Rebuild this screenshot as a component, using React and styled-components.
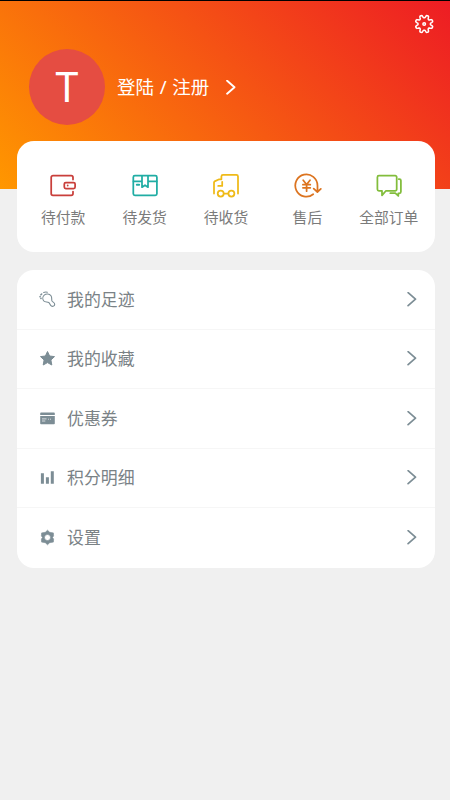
import React from 'react'
import styled, { createGlobalStyle } from 'styled-components'

const GlobalStyle = createGlobalStyle`
    * {
        box-sizing: border-box;
    }

    body {
        margin: 0;
        background-color: #f0f0f0;
        font-family: "Noto Sans", "Noto Sans CJK SC", sans-serif;
    }
`;

const Page = styled.div`
    height: 800px;
    overflow: hidden;
    background-color: #f0f0f0;
`;

const Header = styled.header`
    height: 189px;
    border-top: 1px solid #000;
    background: linear-gradient(45deg, #ff9700, #ed1c24) border-box;
    display: flex;
    align-items: flex-start;
    padding: 48px 15px 0 29px;
`;

const Avatar = styled.div`
    width: 76px;
    height: 76px;
    border-radius: 50%;
    background-color: #e54d42;
    color: #fff;
    font-size: 41px;
    line-height: 74px;
    text-align: center;
`;

const Login = styled.div`
    display: flex;
    align-items: center;
    height: 76px;
    margin-left: 12px;
    color: #fff;
    font-size: 18.5px;
    line-height: 24px;
    word-spacing: 0.9px;
    white-space: pre;

    svg {
        margin-left: 17px;
    }
`;

const Setting = styled.div`
    height: 22px;
    margin: -36px 0 0 auto;
    color: #fff;
`;

const Card = styled.section`
    width: 418px;
    margin-left: 17px;
    border-radius: 17px;
    background-color: #fff;
`;

const OrderCard = styled(Card)`
    height: 111px;
    margin-top: -48px;
    padding: 31px 5.5px 0;
    display: grid;
    grid-template-columns: repeat(5, 1fr);
`;

const OrderItem = styled.div`
    display: flex;
    flex-direction: column;
    align-items: center;
    color: ${(props) => props.$color};

    span {
        margin-top: 8px;
        color: #7b7b7b;
        font-size: 14.8px;
        line-height: 22px;
    }
`;

const MenuCard = styled(Card)`
    height: 297.5px;
    margin-top: 18px;
`;

const MenuRow = styled.div`
    display: flex;
    align-items: center;
    height: 59.5px;
    padding: 0 18px 0 22px;
    color: #7c8d95;
    border-bottom: 1px solid ${(props) => (props.$last ? 'transparent' : '#f6f6f6')};

    span {
        flex: 1;
        margin-left: 11px;
        padding-top: 1px;
        color: #7a8286;
        font-size: 16.9px;
        line-height: 24px;
    }
`;

const Line = styled.svg`
    display: block;
    flex-shrink: 0;
    fill: none;
    stroke: currentColor;
    stroke-width: ${(props) => props.$weight || 1.75};
    stroke-linecap: round;
    stroke-linejoin: round;
`;

const MenuSvg = styled.svg`
    display: block;
    fill: currentColor;
`;

// wavy gear outline, one smooth wave per tooth
const gearPath = (cx, cy, teeth, radius, depth) => {
    const points = []
    const total = teeth * 16
    for (let i = 0; i < total; i++) {
        const a = (i / total) * Math.PI * 2
        const r = radius + depth * Math.tanh(-2.2 * Math.cos(a * teeth))
        points.push(`${(cx + Math.cos(a) * r).toFixed(2)} ${(cy + Math.sin(a) * r).toFixed(2)}`)
    }
    return `M${points.join('L')}Z`
}

const GearOutline = () => (
    <Line width="22" height="22" viewBox="0 0 22 22" $weight={1.5}>
        <path d={gearPath(11.2, 11, 8, 7.55, 1.4)} />
        <circle cx="11.2" cy="11" r="1.3" />
    </Line>
)

const WalletIcon = () => (
    <Line width="30" height="26" viewBox="0 0 30 26">
        <path d="M25 7.5V5.5a1.8 1.8 0 0 0-1.8-1.8H5a1.8 1.8 0 0 0-1.8 1.8v16A1.8 1.8 0 0 0 5 23.3h18.2a1.8 1.8 0 0 0 1.8-1.8v-2" />
        <rect x="16.3" y="10.5" width="10.8" height="6" rx="1.5" />
        <circle cx="19.7" cy="13.5" r=".9" fill="currentColor" stroke="none" />
    </Line>
)

const BoxIcon = () => (
    <Line width="30" height="26" viewBox="0 0 30 26">
        <rect x="3.3" y="3.7" width="23.6" height="19.6" rx="1.6" />
        <path d="M3.5 9.4h8.2M18.3 9.4h8.4M12 4v11.2l3-2 3 2V4" />
        <path d="M6.8 12.7h2.4" strokeWidth="1.9" />
    </Line>
)

const TruckIcon = () => (
    <Line width="30" height="26" viewBox="0 0 30 26">
        <path d="M3 21.5v-11q0-.7.6-1.1l4.6-2.1h2.2V4.5A1.6 1.6 0 0 1 12 2.9h13.4A1.6 1.6 0 0 1 27 4.5v17" />
        <path d="M11.2 9.8v4.1H7.2M12.9 21.6h4.3" />
        <circle cx="9.7" cy="21.6" r="3" />
        <circle cx="20.4" cy="21.6" r="3" />
    </Line>
)

const RefundIcon = () => (
    <Line width="30" height="26" viewBox="0 0 30 26">
        <path d="M21.2 22.3A11.1 11.1 0 1 1 25.5 13.5V19.4M21.7 16.6l3.7 3.4 3.4-3.1" />
        <path d="M11.2 8.3l3.4 4.2L18 8.3M10.9 12.7h7.4M10.9 15.8h7.4M14.6 12.5v6.7" />
    </Line>
)

const ChatIcon = () => (
    <Line width="30" height="26" viewBox="0 0 30 26">
        <path d="M4.9 3.7h16.3a1.5 1.5 0 0 1 1.5 1.5v12.1a1.5 1.5 0 0 1-1.5 1.5h-9.2l-4 4.6v-4.6H4.9a1.5 1.5 0 0 1-1.5-1.5V5.2a1.5 1.5 0 0 1 1.5-1.5Z" />
        <path d="M24.7 7h.7a1.5 1.5 0 0 1 1.5 1.5v11.3a1.5 1.5 0 0 1-1.5 1.5h-1.1v2.6l-3-2.7h-5" />
    </Line>
)

const ArrowIcon = ({ weight = 1.7 }) => (
    <Line width="10" height="15" viewBox="0 0 10 15" $weight={weight}>
        <path d="M1.1.7l7.4 6.5-7.4 6.5" />
    </Line>
)

const FootIcon = () => (
    <Line width="17" height="17" viewBox="0 0 17 17" $weight={1.1}>
        <path d="M5.2 4.2C7.2 2.3 10.4 2.600 12 4.800c1.300 1.900.3 3.800 1 5.200.7 1.200 2.600 1.400 2.700 3.200 0 1.800-1.900 2.700-3.300 1.900-1.500-.9-1.300-2.700-2.700-3.600-1.500-.9-3.600.1-4.900-1.500-1.400-1.700-1.300-4.300.4-5.800Z" />
        <path d="M4.700 1.500q1.800-.9 3.600-.2" />
        <path d="M1.900 3.800l.8-.8M1 5.700l.1-.1M1.900 7.500l.1-.1" strokeWidth="1.5" />
    </Line>
)

const StarIcon = () => (
    <MenuSvg width="17" height="17" viewBox="0 0 17 17">
        <path stroke="currentColor" strokeLinejoin="round" d="M8.500 1.500l2.100 4.500 4.900.6-3.600 3.400.9 5-4.300-2.400-4.300 2.400.9-5-3.600-3.400 4.900-.6Z" />
    </MenuSvg>
)

const CouponIcon = () => (
    <MenuSvg width="17" height="17" viewBox="0 0 17 17">
        <path d="M2 2.400h13a.8.8 0 0 1 .8.800v1.700H1.200V3.200a.8.8 0 0 1 .8-.8ZM1.200 6h14.600v7.500a.8.8 0 0 1-.8.800H2a.8.8 0 0 1-.8-.8Z" />
        <path d="M3 8.900h4.500M3 11h3.300M9 9.200h.9M11 9.200h1" stroke="#fff" strokeWidth=".7" />
    </MenuSvg>
)

const BarsIcon = () => (
    <MenuSvg width="17" height="17" viewBox="0 0 17 17">
        <path d="M1.900 4.300h3v10.500h-3ZM6.900 8.200h3v6.600h-3ZM11.800 2.200h3v12.600h-3Z" />
    </MenuSvg>
)

const GearIcon = () => (
    <MenuSvg width="17" height="17" viewBox="0 0 17 17">
        <path
            fillRule="evenodd"
            stroke="currentColor"
            strokeWidth=".6"
            strokeLinejoin="round"
            d="M8.500 1.200l2.200 2.100 3.700.6.2 3-1.100 1.600 1.100 1.600-.2 3-3.700.6-2.200 2.100-2.200-2.100-3.700-.6-.2-3 1.100-1.600-1.100-1.600.2-3 3.700-.6ZM8.500 5.500a3 3 0 1 0 0 6 3 3 0 0 0 0-6Z"
        />
    </MenuSvg>
)

const orders = [
    { name: '待付款', color: '#c93f3b', icon: <WalletIcon /> },
    { name: '待发货', color: '#20ada4', icon: <BoxIcon /> },
    { name: '待收货', color: '#efba18', icon: <TruckIcon /> },
    { name: '售后', color: '#dc7420', icon: <RefundIcon /> },
    { name: '全部订单', color: '#82bd3c', icon: <ChatIcon /> },
]

const menus = [
    { name: '我的足迹', icon: <FootIcon /> },
    { name: '我的收藏', icon: <StarIcon /> },
    { name: '优惠券', icon: <CouponIcon /> },
    { name: '积分明细', icon: <BarsIcon /> },
    { name: '设置', icon: <GearIcon /> },
]

const App = () => {
    return (
        <Page>
            <GlobalStyle />
            <Header>
                <Avatar>T</Avatar>
                <Login>
                    登陆 / 注册
                    <ArrowIcon weight={1.9} />
                </Login>
                <Setting>
                    <GearOutline />
                </Setting>
            </Header>

            <OrderCard>
                {orders.map((data) => (
                    <OrderItem key={data.name} $color={data.color}>
                        {data.icon}
                        <span>{data.name}</span>
                    </OrderItem>
                ))}
            </OrderCard>

            <MenuCard>
                {menus.map((data, index) => (
                    <MenuRow key={data.name} $last={index === menus.length - 1}>
                        {data.icon}
                        <span>{data.name}</span>
                        <ArrowIcon />
                    </MenuRow>
                ))}
            </MenuCard>
        </Page>
    )
}

export default App
